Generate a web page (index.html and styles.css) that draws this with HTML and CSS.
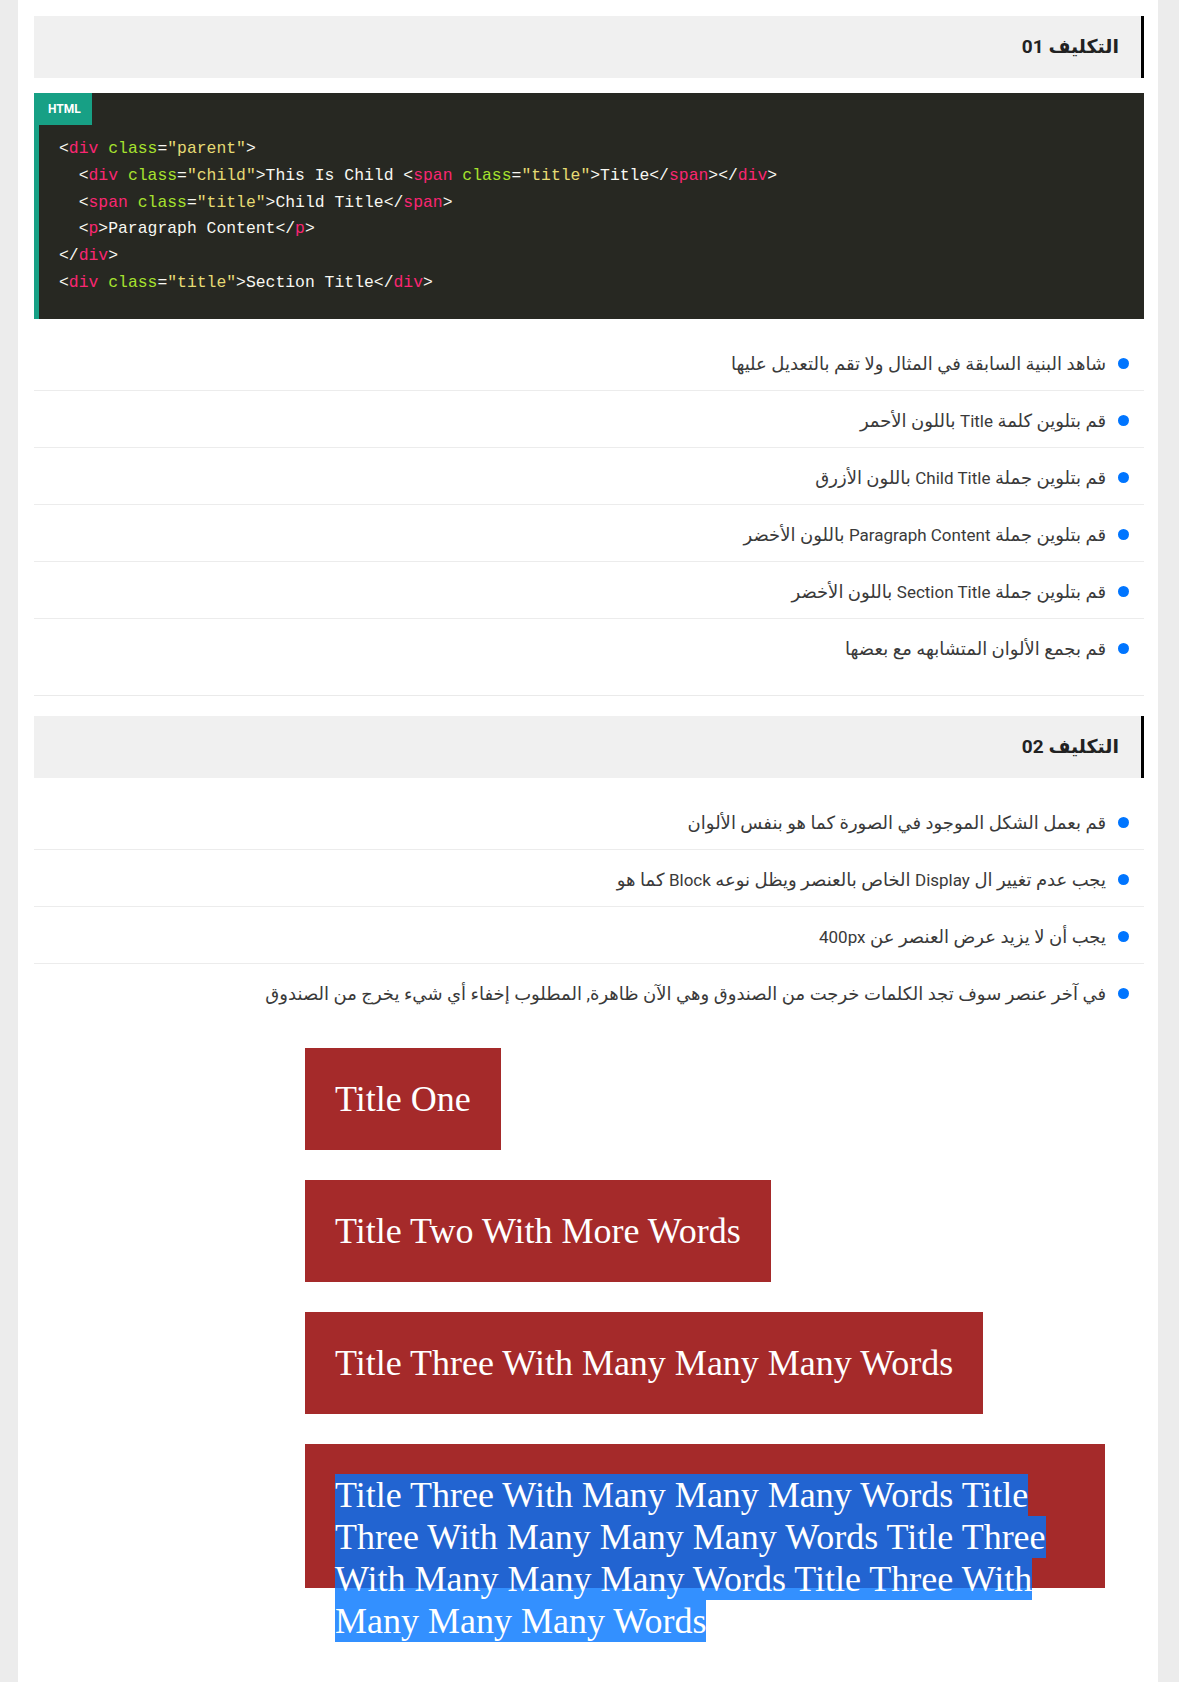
FILE: index.html
```html
<!DOCTYPE html>
<html lang="ar">
<head>
<meta charset="utf-8">
<title>التكليف</title>
<link rel="stylesheet" href="styles.css">
</head>
<body>
<div class="page">
  <section class="task task-first">
    <h2 class="task-title">التكليف 01</h2>
    <div class="code-block">
      <div class="code-label">HTML</div>
      <div class="code">
        <div class="ln">&lt;<span class="tg">div</span> <span class="at">class</span>=<span class="st">"parent"</span>&gt;</div>
        <div class="ln">  &lt;<span class="tg">div</span> <span class="at">class</span>=<span class="st">"child"</span>&gt;This Is Child &lt;<span class="tg">span</span> <span class="at">class</span>=<span class="st">"title"</span>&gt;Title&lt;/<span class="tg">span</span>&gt;&lt;/<span class="tg">div</span>&gt;</div>
        <div class="ln">  &lt;<span class="tg">span</span> <span class="at">class</span>=<span class="st">"title"</span>&gt;Child Title&lt;/<span class="tg">span</span>&gt;</div>
        <div class="ln">  &lt;<span class="tg">p</span>&gt;Paragraph Content&lt;/<span class="tg">p</span>&gt;</div>
        <div class="ln">&lt;/<span class="tg">div</span>&gt;</div>
        <div class="ln">&lt;<span class="tg">div</span> <span class="at">class</span>=<span class="st">"title"</span>&gt;Section Title&lt;/<span class="tg">div</span>&gt;</div>
      </div>
    </div>
    <ul class="steps">
      <li>شاهد البنية السابقة في المثال ولا تقم بالتعديل عليها</li>
      <li>قم بتلوين كلمة <span class="en">Title</span> باللون الأحمر</li>
      <li>قم بتلوين جملة <span class="en">Child Title</span> باللون الأزرق</li>
      <li>قم بتلوين جملة <span class="en">Paragraph Content</span> باللون الأخضر</li>
      <li>قم بتلوين جملة <span class="en">Section Title</span> باللون الأخضر</li>
      <li>قم بجمع الألوان المتشابهه مع بعضها</li>
    </ul>
  </section>

  <section class="task">
    <h2 class="task-title">التكليف 02</h2>
    <ul class="steps">
      <li>قم بعمل الشكل الموجود في الصورة كما هو بنفس الألوان</li>
      <li>يجب عدم تغيير ال <span class="en">Display</span> الخاص بالعنصر ويظل نوعه <span class="en">Block</span> كما هو</li>
      <li>يجب أن لا يزيد عرض العنصر عن <span class="en">400px</span></li>
      <li>في آخر عنصر سوف تجد الكلمات خرجت من الصندوق وهي الآن ظاهرة, المطلوب إخفاء أي شيء يخرج من الصندوق</li>
    </ul>
    <div class="demo">
      <div class="box">Title One</div>
      <div class="box">Title Two With More Words</div>
      <div class="box">Title Three With Many Many Many Words</div>
      <div class="box box-long"><span class="selected">Title Three With Many Many Many Words Title Three With Many Many Many Words Title Three With Many Many Many Words Title Three With Many Many Many Words</span></div>
    </div>
  </section>
</div>
</body>
</html>
```

FILE: styles.css
```css
html, body {
  margin: 0;
  padding: 0;
}

body {
  background: #ececec;
  font-family: "Roboto", "DejaVu Sans", sans-serif;
  color: #333;
}

.page {
  direction: rtl;
  box-sizing: border-box;
  width: 1140px;
  min-height: 100vh;
  margin: 0 auto 0 18px;
  padding: 16px 14px 40px 16px;
  background: #fff;
}

.task-first {
  padding-bottom: 20px;
  border-bottom: 1px solid #eaeaea;
  margin-bottom: 20px;
}

.task-title {
  margin: 0 0 15px;
  height: 62px;
  line-height: 62px;
  padding: 0 22px;
  background: #f0f0f0;
  border-right: 3px solid #000;
  font-size: 19px;
  font-weight: bold;
  color: #222;
}

.code-block {
  direction: ltr;
  background: #272822;
  border-left: 5px solid #17a085;
  padding: 0 20px 22px;
}

.code-label {
  width: fit-content;
  margin-left: -20px;
  height: 32px;
  line-height: 32px;
  padding: 0 11px 0 9px;
  background: #17a085;
  color: #fff;
  font-family: "Roboto", sans-serif;
  font-weight: bold;
  font-size: 12px;
}

.code {
  margin: 11px 0 0;
  font-family: "Liberation Mono", monospace;
  font-size: 16.4px;
  line-height: 26.8px;
  color: #f8f8f2;
}

.ln {
  white-space: pre;
}

.tg { color: #f92672; }
.at { color: #a6e22e; }
.st { color: #e6db74; }

.steps {
  list-style: none;
  margin: 15px 0 0;
  padding: 0;
}

.steps li {
  padding: 16px 15px 12px 0;
  line-height: 28px;
  font-size: 18px;
  color: #3a3a3a;
  border-bottom: 1px solid #ececec;
}

.steps li::before {
  content: "";
  display: inline-block;
  vertical-align: middle;
  width: 11px;
  height: 11px;
  margin: -3px 0 0 12px;
  border-radius: 50%;
  background: #0075ff;
}

.steps li:last-child {
  border-bottom: none;
}

.en {
  font-size: 17px;
}

.demo {
  direction: ltr;
  width: 800px;
  margin: 28px 39px 0 auto;
  display: flex;
  flex-direction: column;
  align-items: flex-start;
  gap: 30px;
}

.box {
  box-sizing: border-box;
  padding: 30px;
  background: #a52a2a;
  color: #fff;
  font-family: "Liberation Serif", serif;
  font-size: 36px;
  line-height: 42px;
}

.box-long {
  align-self: stretch;
  height: 144px;
}

.selected {
  padding: 1px 0;
  background-color: #3390ff;
  background-image: linear-gradient(#2264d1, #2264d1);
  background-repeat: no-repeat;
  background-attachment: fixed;
  background-position: 305px 1444px;
  background-size: 800px 144px;
}
```
